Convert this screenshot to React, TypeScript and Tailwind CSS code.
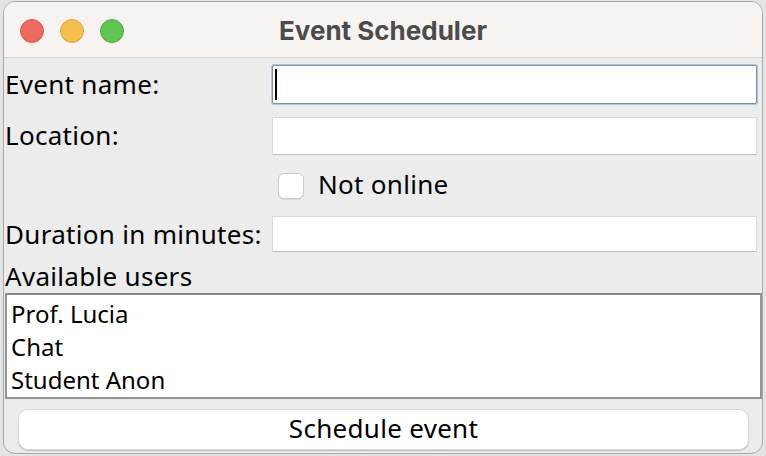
import React from "react";

const users = ["Prof. Lucia", "Chat", "Student Anon"];

const TextField = ({ focused, h }: { focused?: boolean; h: string }) => (
  <div
    className={
      focused
        ? `${h} flex-1 mr-[5px] bg-white border border-[#7f91aa] rounded-[2px] shadow-[0_0_0_1px_#b8c4d4] flex items-center pl-[2px]`
        : `${h} flex-1 mr-[5px] bg-white border border-[#dadada] border-b-[#bdbdbd]`
    }
  >
    {focused && <div className="w-[2px] h-[31px] bg-black" />}
  </div>
);

const App = () => {
  return (
    <div
      className="w-[766px] h-[456px] bg-[#e4e4e4] pt-[1px] px-[3px] overflow-hidden"
      style={{ fontFamily: "'Noto Sans', 'DejaVu Sans', sans-serif" }}
    >
      <div className="h-[453px] bg-[#ececec] border border-[#a9a9a9] rounded-[12px] overflow-hidden flex flex-col">
        {/* title bar */}
        <div className="relative h-[56px] shrink-0 bg-[#f6f3f0] border-b border-[#d6d3d0] flex items-center justify-center">
          <div className="absolute left-[16px] top-[17px] flex gap-[16px]">
            <div className="w-[24px] h-[24px] rounded-full bg-[#ed6a5e] border border-[#d65a4f]" />
            <div className="w-[24px] h-[24px] rounded-full bg-[#f5bf4f] border border-[#d9a53e]" />
            <div className="w-[24px] h-[24px] rounded-full bg-[#61c554] border border-[#4eab43]" />
          </div>
          <span
            className="text-[26px] font-bold text-[#4b4b4b] mt-[1px]"
            style={{ fontFamily: "Inter, 'Liberation Sans', sans-serif" }}
          >
            Event Scheduler
          </span>
        </div>

        {/* form */}
        <div className="flex flex-col pl-[1px] text-[26px] tracking-[0.3px] text-black leading-none">
          <div className="flex items-center mt-[7px]">
            <div className="w-[267px] shrink-0 pb-[2px]">Event name:</div>
            <TextField focused h="h-[39px]" />
          </div>
          <div className="flex items-center mt-[13px]">
            <div className="w-[267px] shrink-0 pb-[2px]">Location:</div>
            <TextField h="h-[38px]" />
          </div>
          <div className="flex items-center mt-[17px] h-[27px]">
            <div className="w-[273px] shrink-0" />
            <div className="w-[26px] h-[26px] rounded-[6px] bg-white border border-[#cbcbcb] shadow-[0_1px_1px_rgba(0,0,0,0.08)]" />
            <span className="ml-[14px] pb-[3px]">Not online</span>
          </div>
          <div className="flex items-center mt-[17px]">
            <div className="w-[267px] shrink-0 pb-[1px]">Duration in minutes:</div>
            <TextField h="h-[36px]" />
          </div>
          <div className="h-[34px] mt-[7px] flex items-center pb-[1px]">Available users</div>
          <div className="h-[106px] bg-white border-2 border-[#949494] border-t-[#8a8a8a] flex flex-col pl-[4px] pt-[2px] tracking-normal">
            {users.map((u) => (
              <div key={u} className="h-[34px] flex items-center text-[24px]">
                {u}
              </div>
            ))}
          </div>
          <div className="mt-[10px] mx-[13px] h-[41px] bg-white rounded-[10px] border border-[#d9d9d9] shadow-[0_1px_1px_rgba(0,0,0,0.2)] flex items-center justify-center pb-[3px]">
            Schedule event
          </div>
        </div>
      </div>
    </div>
  );
};

export default App;
